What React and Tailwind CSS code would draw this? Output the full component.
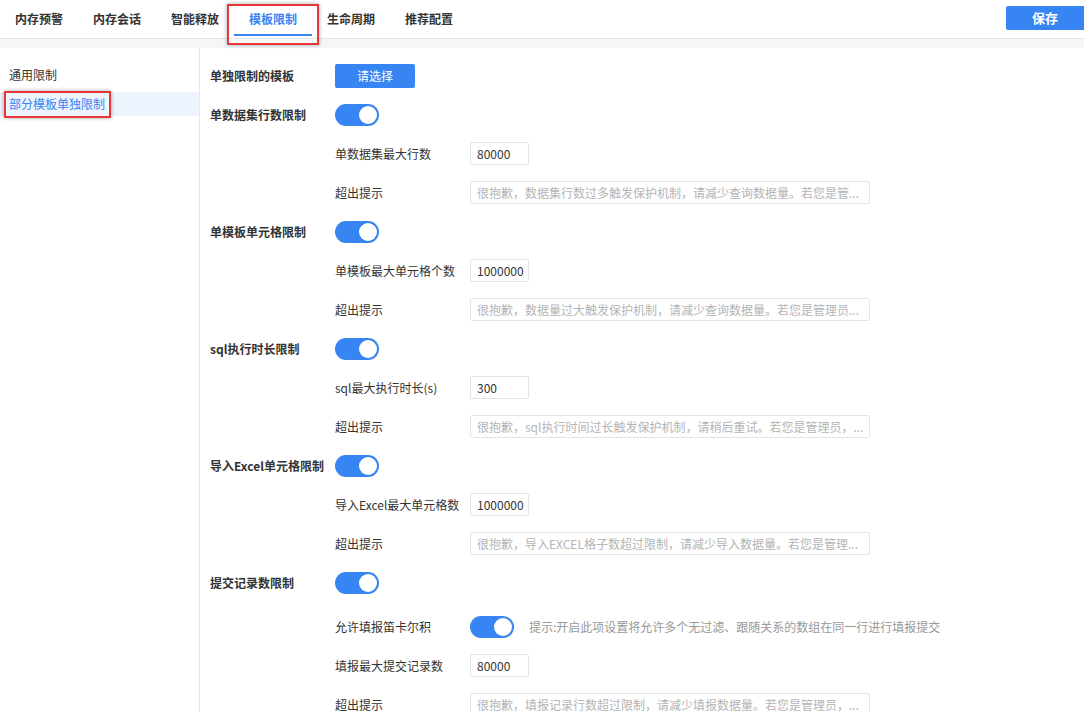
import React from 'react';

const tabs = ['内存预警', '内存会话', '智能释放', '模板限制', '生命周期', '推荐配置'];

const Toggle = () => (
  <div className="w-[44px] h-[22px] rounded-full bg-[#3685f2] flex items-center justify-end pr-[2px]">
    <div className="w-[18px] h-[18px] rounded-full bg-white" />
  </div>
);

const MainRow = ({ label, children, className = '' }) => (
  <div className={`h-[39px] flex items-center ${className}`}>
    <div className="w-[125px] font-bold text-[#333]">{label}</div>
    {children}
  </div>
);

const SubRow = ({ label, children, className = '' }) => (
  <div className={`h-[39px] flex items-center pl-[125px] ${className}`}>
    <div className="w-[135px] text-[#333]">{label}</div>
    {children}
  </div>
);

const NumInput = ({ value }) => (
  <div className="w-[59px] h-[23px] border border-[#e3e3e3] rounded-[2px] flex items-center px-[6px] text-[#333]">{value}</div>
);

const TipInput = ({ text }) => (
  <div className="w-[400px] h-[23px] border border-[#e3e3e3] rounded-[2px] flex items-center px-[6px] text-[#b4b4b4] overflow-hidden whitespace-nowrap">
    {text}
  </div>
);

const sections = [
  {
    label: '单数据集行数限制',
    maxLabel: '单数据集最大行数',
    value: '80000',
    tip: '很抱歉，数据集行数过多触发保护机制，请减少查询数据量。若您是管...',
  },
  {
    label: '单模板单元格限制',
    maxLabel: '单模板最大单元格个数',
    value: '1000000',
    tip: '很抱歉，数据量过大触发保护机制，请减少查询数据量。若您是管理员...',
  },
  {
    label: 'sql执行时长限制',
    maxLabel: 'sql最大执行时长(s)',
    value: '300',
    tip: '很抱歉，sql执行时间过长触发保护机制，请稍后重试。若您是管理员，...',
  },
  {
    label: '导入Excel单元格限制',
    maxLabel: '导入Excel最大单元格数',
    value: '1000000',
    tip: '很抱歉，导入EXCEL格子数超过限制，请减少导入数据量。若您是管理...',
  },
];

export default function App() {
  return (
    <div
      className="w-[1084px] h-[712px] overflow-hidden bg-white text-[12px] flex flex-col"
      style={{ fontFamily: '"Noto Sans CJK SC", "Noto Sans", sans-serif' }}
    >
      {/* top tabs */}
      <div className="h-[39px] shrink-0 flex items-stretch border-b border-[#e4e6ea]">
        <div className="flex">
          {tabs.map((t, i) => (
            <div
              key={t}
              className={`relative w-[78px] flex items-center justify-center font-bold ${i === 3 ? 'text-[#3685f2]' : 'text-[#333]'}`}
            >
              {t}
              {i === 3 && (
                <>
                  <div className="absolute left-0 right-0 bottom-[2px] h-[2px] bg-[#3685f2]" />
                  <div className="absolute left-[-7px] right-[-7px] top-[4px] h-[41px] border-2 border-[#e8373a] shadow-[0_0_4px_rgba(0,0,0,0.35)] z-10" />
                </>
              )}
            </div>
          ))}
        </div>
        <div className="ml-auto pt-[6px]">
          <div className="w-[78px] h-[24px] bg-[#3685f2] text-white font-bold flex items-center justify-center rounded-l-[2px] text-[13px]">
            保存
          </div>
        </div>
      </div>
      <div className="h-[9px] shrink-0 bg-[#f5f6f8]" />

      <div className="flex flex-1 min-h-0">
        {/* sidebar */}
        <div className="w-[200px] shrink-0 border-r border-[#e8e8e8] pt-[15px] flex flex-col gap-[6px]">
          <div className="h-[23px] flex items-center pl-[9px] text-[#333]">通用限制</div>
          <div className="relative h-[24px] flex items-center pl-[9px] text-[#3685f2] bg-[#eef4fd]">
            部分模板单独限制
            <div className="absolute left-[4px] w-[107px] top-[-1px] h-[27px] border-2 border-[#e8373a] shadow-[0_0_4px_rgba(0,0,0,0.35)]" />
          </div>
        </div>

        {/* content */}
        <div className="flex-1 pl-[10px] pt-[8px]">
          <MainRow label="单独限制的模板">
            <div className="w-[80px] h-[24px] bg-[#3685f2] text-white flex items-center justify-center rounded-[2px]">请选择</div>
          </MainRow>
          {sections.map((s) => (
            <React.Fragment key={s.label}>
              <MainRow label={s.label}>
                <Toggle />
              </MainRow>
              <SubRow label={s.maxLabel}>
                <NumInput value={s.value} />
              </SubRow>
              <SubRow label="超出提示">
                <TipInput text={s.tip} />
              </SubRow>
            </React.Fragment>
          ))}
          <MainRow label="提交记录数限制">
            <Toggle />
          </MainRow>
          <SubRow label="允许填报笛卡尔积" className="mt-[5px]">
            <Toggle />
            <span className="ml-[15px] text-[#999]">提示:开启此项设置将允许多个无过滤、跟随关系的数组在同一行进行填报提交</span>
          </SubRow>
          <SubRow label="填报最大提交记录数">
            <NumInput value="80000" />
          </SubRow>
          <SubRow label="超出提示">
            <TipInput text="很抱歉，填报记录行数超过限制，请减少填报数据量。若您是管理员，..." />
          </SubRow>
        </div>
      </div>
    </div>
  );
}
